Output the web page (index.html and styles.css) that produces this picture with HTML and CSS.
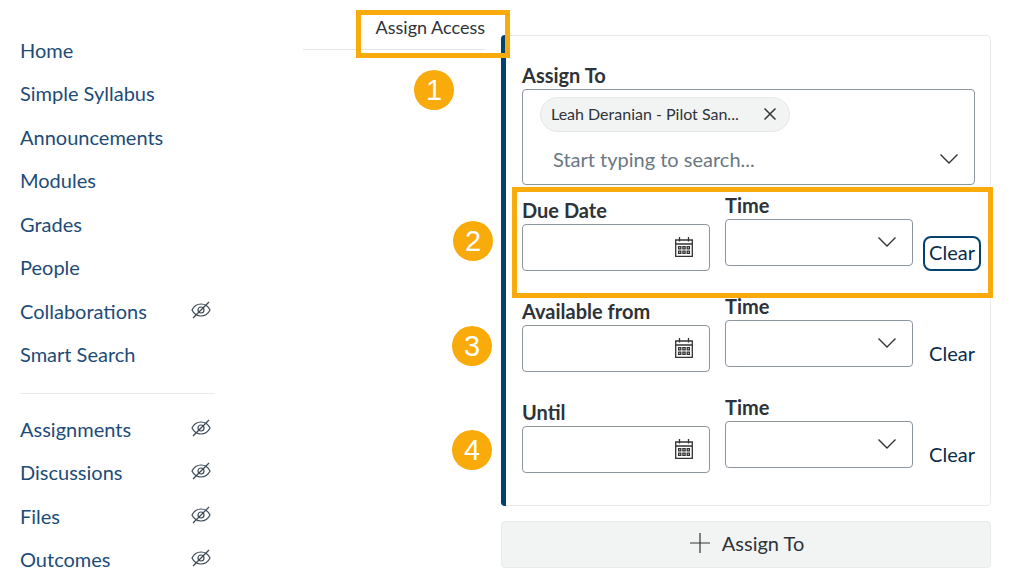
FILE: index.html
```
<!DOCTYPE html>
<html lang="en">
<head>
<meta charset="UTF-8">
<meta name="viewport" content="width=device-width, initial-scale=1.0">
<title>Assign Access</title>
<link rel="stylesheet" href="styles.css">
</head>
<body>
<svg class="sprite" aria-hidden="true">
  <symbol id="icon-hidden" viewBox="0 0 20 18">
    <path d="M1 9C3 5 6 3 10 3s7 2 9 6c-2 4-5 6-9 6s-7-2-9-6z"/>
    <circle cx="10" cy="9" r="3"/>
    <path d="M2 17L18 1"/>
  </symbol>
  <symbol id="icon-calendar" viewBox="0 0 18 20">
    <path d="M.7 3h16.6v16.3H.7zM.7 7h16.6M4.5 0v4.5M13.5 0v4.5"/>
    <path d="M3.6 9.7h2.2v2.2H3.6zM7.9 9.7h2.2v2.2H7.9zM12.2 9.7h2.2v2.2h-2.2zM3.6 14.2h2.2v2.2H3.6zM7.9 14.2h2.2v2.2H7.9zM12.2 14.2h2.2v2.2h-2.2z"/>
  </symbol>
  <symbol id="icon-arrow" viewBox="0 0 18 10">
    <path d="M.5.5L9 9 17.500.5"/>
  </symbol>
</svg>

<nav class="sidebar">
  <ul class="menu">
    <li><a href="#">Home</a></li>
    <li><a href="#">Simple Syllabus</a></li>
    <li><a href="#">Announcements</a></li>
    <li><a href="#">Modules</a></li>
    <li><a href="#">Grades</a></li>
    <li><a href="#">People</a></li>
    <li><a href="#">Collaborations</a><svg class="hidden-icon"><use href="#icon-hidden"/></svg></li>
    <li><a href="#">Smart Search</a></li>
  </ul>
  <ul class="menu menu-more">
    <li><a href="#">Assignments</a><svg class="hidden-icon"><use href="#icon-hidden"/></svg></li>
    <li><a href="#">Discussions</a><svg class="hidden-icon"><use href="#icon-hidden"/></svg></li>
    <li><a href="#">Files</a><svg class="hidden-icon"><use href="#icon-hidden"/></svg></li>
    <li><a href="#">Outcomes</a><svg class="hidden-icon"><use href="#icon-hidden"/></svg></li>
  </ul>
</nav>

<main class="content">
  <div class="section-title">
    Assign Access
    <span class="highlight highlight-title"></span>
  </div>

  <form class="assign">
    <div class="card">
      <div class="assign-to">
        <label for="assignee">Assign To</label>
        <div class="assignee-box">
          <button type="button" class="tag">
            Leah Deranian - Pilot San...
            <svg class="tag-close" viewBox="0 0 12 12"><path d="M.5.5l11 11M11.500.5l-11 11"/></svg>
          </button>
          <div class="search">
            <input type="text" id="assignee" placeholder="Start typing to search...">
            <svg class="arrow"><use href="#icon-arrow"/></svg>
          </div>
        </div>
      </div>

      <div class="date-row">
        <div class="field field-date">
          <label for="due-date">Due Date</label>
          <div class="control">
            <input type="text" id="due-date">
            <svg class="calendar"><use href="#icon-calendar"/></svg>
          </div>
        </div>
        <div class="field field-time">
          <label for="due-time">Time</label>
          <div class="control">
            <select id="due-time"><option></option></select>
            <svg class="arrow"><use href="#icon-arrow"/></svg>
          </div>
        </div>
        <button type="button" class="clear clear-active">Clear</button>
        <span class="highlight highlight-row"></span>
      </div>

      <div class="date-row">
        <div class="field field-date">
          <label for="from-date">Available from</label>
          <div class="control">
            <input type="text" id="from-date">
            <svg class="calendar"><use href="#icon-calendar"/></svg>
          </div>
        </div>
        <div class="field field-time">
          <label for="from-time">Time</label>
          <div class="control">
            <select id="from-time"><option></option></select>
            <svg class="arrow"><use href="#icon-arrow"/></svg>
          </div>
        </div>
        <button type="button" class="clear">Clear</button>
      </div>

      <div class="date-row">
        <div class="field field-date">
          <label for="until-date">Until</label>
          <div class="control">
            <input type="text" id="until-date">
            <svg class="calendar"><use href="#icon-calendar"/></svg>
          </div>
        </div>
        <div class="field field-time">
          <label for="until-time">Time</label>
          <div class="control">
            <select id="until-time"><option></option></select>
            <svg class="arrow"><use href="#icon-arrow"/></svg>
          </div>
        </div>
        <button type="button" class="clear">Clear</button>
      </div>
    </div>

    <button type="button" class="add">
      <svg class="plus" viewBox="0 0 20 20"><path d="M10 0v20M0 10h20"/></svg>
      Assign To
    </button>
  </form>

  <!-- step markers -->
  <span class="step step-1">1</span>
  <span class="step step-2">2</span>
  <span class="step step-3">3</span>
  <span class="step step-4">4</span>
</main>
</body>
</html>
```
FILE: styles.css
```
* {
  box-sizing: border-box;
}
body {
  margin: 0;
  display: flex;
  align-items: flex-start;
  background: #fff;
  color: #2d3338;
  font: 20px/24px Lato, "Liberation Sans", sans-serif;
}
input, select, button {
  font: inherit;
  color: inherit;
  margin: 0;
}
svg {
  fill: none;
  stroke: #333;
  flex: none;
}
.sprite {
  position: absolute;
  width: 0;
  height: 0;
}

/* course menu */
.sidebar {
  width: 195px;
  margin: 38px 88px 0 20px;
  flex: none;
}
.menu {
  list-style: none;
  margin: 0;
  padding: 0;
}
.menu li {
  display: flex;
  justify-content: space-between;
  align-items: flex-start;
  padding-right: 4px;
  margin-bottom: 19px;
}
.menu li:nth-child(even) {
  margin-bottom: 20px;
}
.menu li:last-child {
  margin-bottom: 0;
}
.menu a {
  color: #1d4b78;
  text-decoration: none;
}
.menu-more {
  margin-top: 27px;
  padding-top: 23px;
  border-top: 1px solid #e8eaec;
}
.hidden-icon {
  width: 20px;
  height: 18px;
  margin-top: 2px;
  stroke: #3b4a57;
  stroke-width: 1.2;
}

/* content */
.content {
  position: relative;
  flex: 1;
  display: flex;
  align-items: flex-start;
  padding-right: 30px;
}
.section-title {
  position: relative;
  width: 182px;
  margin-right: 16px;
  padding: 15px 0 10px;
  border-bottom: 1px solid #e3e5e6;
  font-size: 18px;
  text-align: right;
  flex: none;
}
.assign {
  flex: 1;
  margin-top: 35px;
}
.card {
  position: relative;
  padding: 27px 9px 32px 20px;
  border: 1px solid #e8eaec;
  border-radius: 4px;
}
.card::before {
  content: "";
  position: absolute;
  top: -1px;
  bottom: -1px;
  left: -1px;
  width: 5px;
  border-radius: 4px 0 0 4px;
  background: #03416f;
}
label {
  display: block;
  margin-bottom: 2px;
  font-weight: bold;
}

.assign-to {
  margin: 0 6px 8px 0;
}
.assignee-box {
  height: 96px;
  padding: 7px 16px 0 17px;
  border: 1px solid #8d959f;
  border-radius: 4px;
}
.tag {
  display: flex;
  justify-content: space-between;
  align-items: center;
  width: 250px;
  height: 35px;
  padding: 0 13px 2px 10px;
  border: 1px solid #e6e8e8;
  border-radius: 18px;
  background: #f2f4f4;
  font-size: 16px;
}
.tag-close {
  width: 12px;
  height: 12px;
  stroke-width: 1.5;
}
.search {
  display: flex;
  align-items: center;
  margin: 15px 0 0 13px;
}
.search input {
  flex: 1;
  min-width: 0;
  padding: 0;
  border: 0;
  background: none;
  outline: none;
}
.search input::placeholder {
  color: #6a7883;
}
.arrow {
  width: 18px;
  height: 10px;
  stroke-width: 1.4;
}

.date-row {
  position: relative;
  display: flex;
  align-items: flex-start;
  margin-bottom: 23px;
}
.date-row:last-child {
  margin-bottom: 0;
}
.field {
  flex: 1;
}
.field-date {
  margin: 5px 15px 0 0;
}
.field-time {
  margin-right: 10px;
}
.control {
  position: relative;
}
.control input, .control select {
  display: block;
  width: 100%;
  height: 47px;
  padding: 0 12px;
  border: 1px solid #8d959f;
  border-radius: 4px;
  background: #fff;
  appearance: none;
}
.control svg {
  position: absolute;
  right: 17px;
  pointer-events: none;
}
.control .arrow {
  top: 18px;
}
.control .calendar {
  top: 13px;
  width: 18px;
  height: 20px;
  stroke-width: 1.3;
}
.clear {
  align-self: flex-end;
  width: 58px;
  height: 35px;
  padding: 0 0 4px;
  border: 2px solid transparent;
  border-radius: 8px;
  background: none;
  color: #0a2c4a;
}
.clear-active {
  border-color: #03416f;
}
.add {
  display: flex;
  justify-content: center;
  align-items: center;
  gap: 12px;
  width: 100%;
  height: 47px;
  margin-top: 15px;
  padding: 0 0 4px 2px;
  border: 1px solid #e8eaea;
  border-radius: 4px;
  background: #f2f4f4;
}
.plus {
  width: 20px;
  height: 20px;
  stroke-width: 1.2;
}

/* tutorial marks */
.highlight {
  position: absolute;
  border: 5px solid #f9ab0b;
  pointer-events: none;
}
.highlight-title {
  z-index: 1;
  top: 10px;
  right: -25px;
  width: 154px;
  height: 48px;
}
.highlight-row {
  top: -6px;
  right: -12px;
  bottom: -27px;
  left: -10px;
}
.step {
  position: absolute;
  width: 40px;
  height: 40px;
  border-radius: 50%;
  background: #f9ab0b;
  color: #fff;
  font: 29px/41px "Liberation Sans", Arial, sans-serif;
  text-align: center;
}
.step-1 {
  top: 70px;
  left: 111px;
}
.step-2 {
  top: 221px;
  left: 150px;
}
.step-3 {
  top: 326px;
  left: 149px;
}
.step-4 {
  top: 430px;
  left: 149px;
}
```
